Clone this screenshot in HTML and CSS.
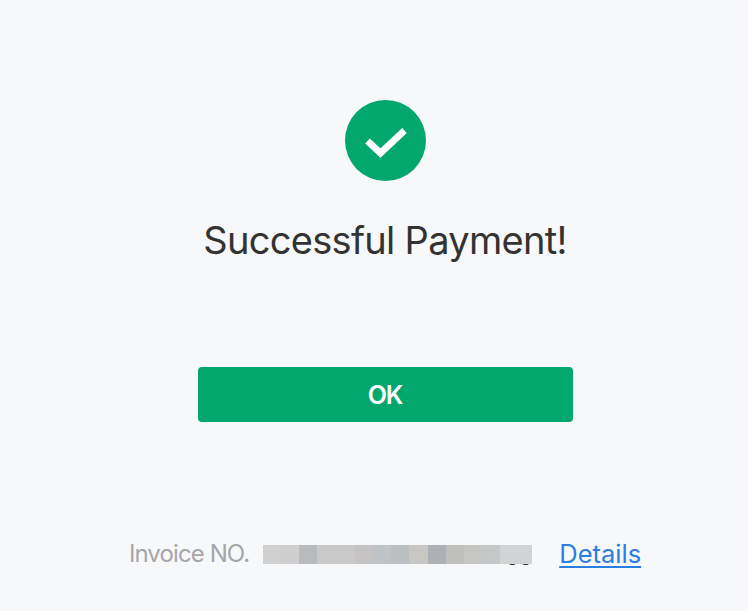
FILE: index.html
```html
<!DOCTYPE html>
<html lang="en">
<head>
  <meta charset="UTF-8">
  <meta name="viewport" content="width=device-width, initial-scale=1.0">
  <title>Successful Payment</title>
  <link rel="stylesheet" href="styles.css">
</head>
<body>

<div class="result-page">
  <div class="status-icon">
    <svg viewBox="0 0 81 81" width="81" height="81" aria-hidden="true">
      <circle cx="40.5" cy="40.5" r="40.5" fill="#02a76e"/>
      <path d="M22.5 41 L35.5 53 L59.5 30.5" fill="none" stroke="#fff" stroke-width="6.8"/>
    </svg>
  </div>

  <h1 class="title">Successful Payment!</h1>

  <a href="#ok" class="ok-button">OK</a>

  <div class="invoice-row">
    <span class="invoice-label">Invoice NO.</span>
    <span class="invoice-number">
      <span class="invoice-end">55</span>
    </span>
    <a href="#details" class="details-link">Details</a>
  </div>
</div>

</body>
</html>
```

FILE: styles.css
```css
body {
  margin: 0;
  padding: 0;
  background: #f7f8fa;
  font-family: "Inter", "Liberation Sans", sans-serif;
  overflow: hidden;
}

.result-page {
  height: 611px;
  box-sizing: border-box;
  padding: 100px 0 0 22px;
  display: flex;
  flex-direction: column;
  align-items: center;
}

.status-icon {
  height: 81px;
}

.status-icon svg {
  display: block;
}

.title {
  margin: 37px 0 0;
  font-size: 38px;
  line-height: 45px;
  font-weight: 400;
  letter-spacing: -0.7px;
  color: #333;
}

.ok-button {
  margin-top: 104px;
  width: 375px;
  height: 55px;
  display: flex;
  justify-content: center;
  align-items: center;
  background: #02a76e;
  border-radius: 4px;
  color: #fff;
  font-size: 25px;
  font-weight: 600;
  letter-spacing: -1.2px;
  text-decoration: none;
}

/* Invoice row */
.invoice-row {
  margin-top: 118px;
  display: flex;
  align-items: center;
  font-size: 24px;
  line-height: 28px;
}

.invoice-label {
  color: #a6a6a6;
  letter-spacing: -0.9px;
}

.invoice-number {
  width: 269px;
  height: 19px;
  margin: 0 27px 0 14px;
  position: relative;
  background: linear-gradient(to right,
    #d0d0d0 0 17px, #cfcfcf 17px 36px, #b8babd 36px 54px, #c9c9c9 54px 92px,
    #c5c3c3 92px 110px, #c0c3c6 110px 128px, #bcbfc2 128px 146px, #c8c7c3 146px 165px,
    #adb0b4 165px 183px, #bfbfbd 183px 201px, #c6c6c3 201px 219px, #c6c7c8 219px 237px,
    #d2d3d5 237px 269px);
}

.invoice-end {
  position: absolute;
  right: 0;
  top: 1px;
  font-size: 22px;
  line-height: 22px;
  color: #333;
  z-index: -1;
}

.details-link {
  color: #2a7de1;
  font-size: 25.5px;
  text-decoration: underline;
  text-underline-offset: 3px;
}
```
